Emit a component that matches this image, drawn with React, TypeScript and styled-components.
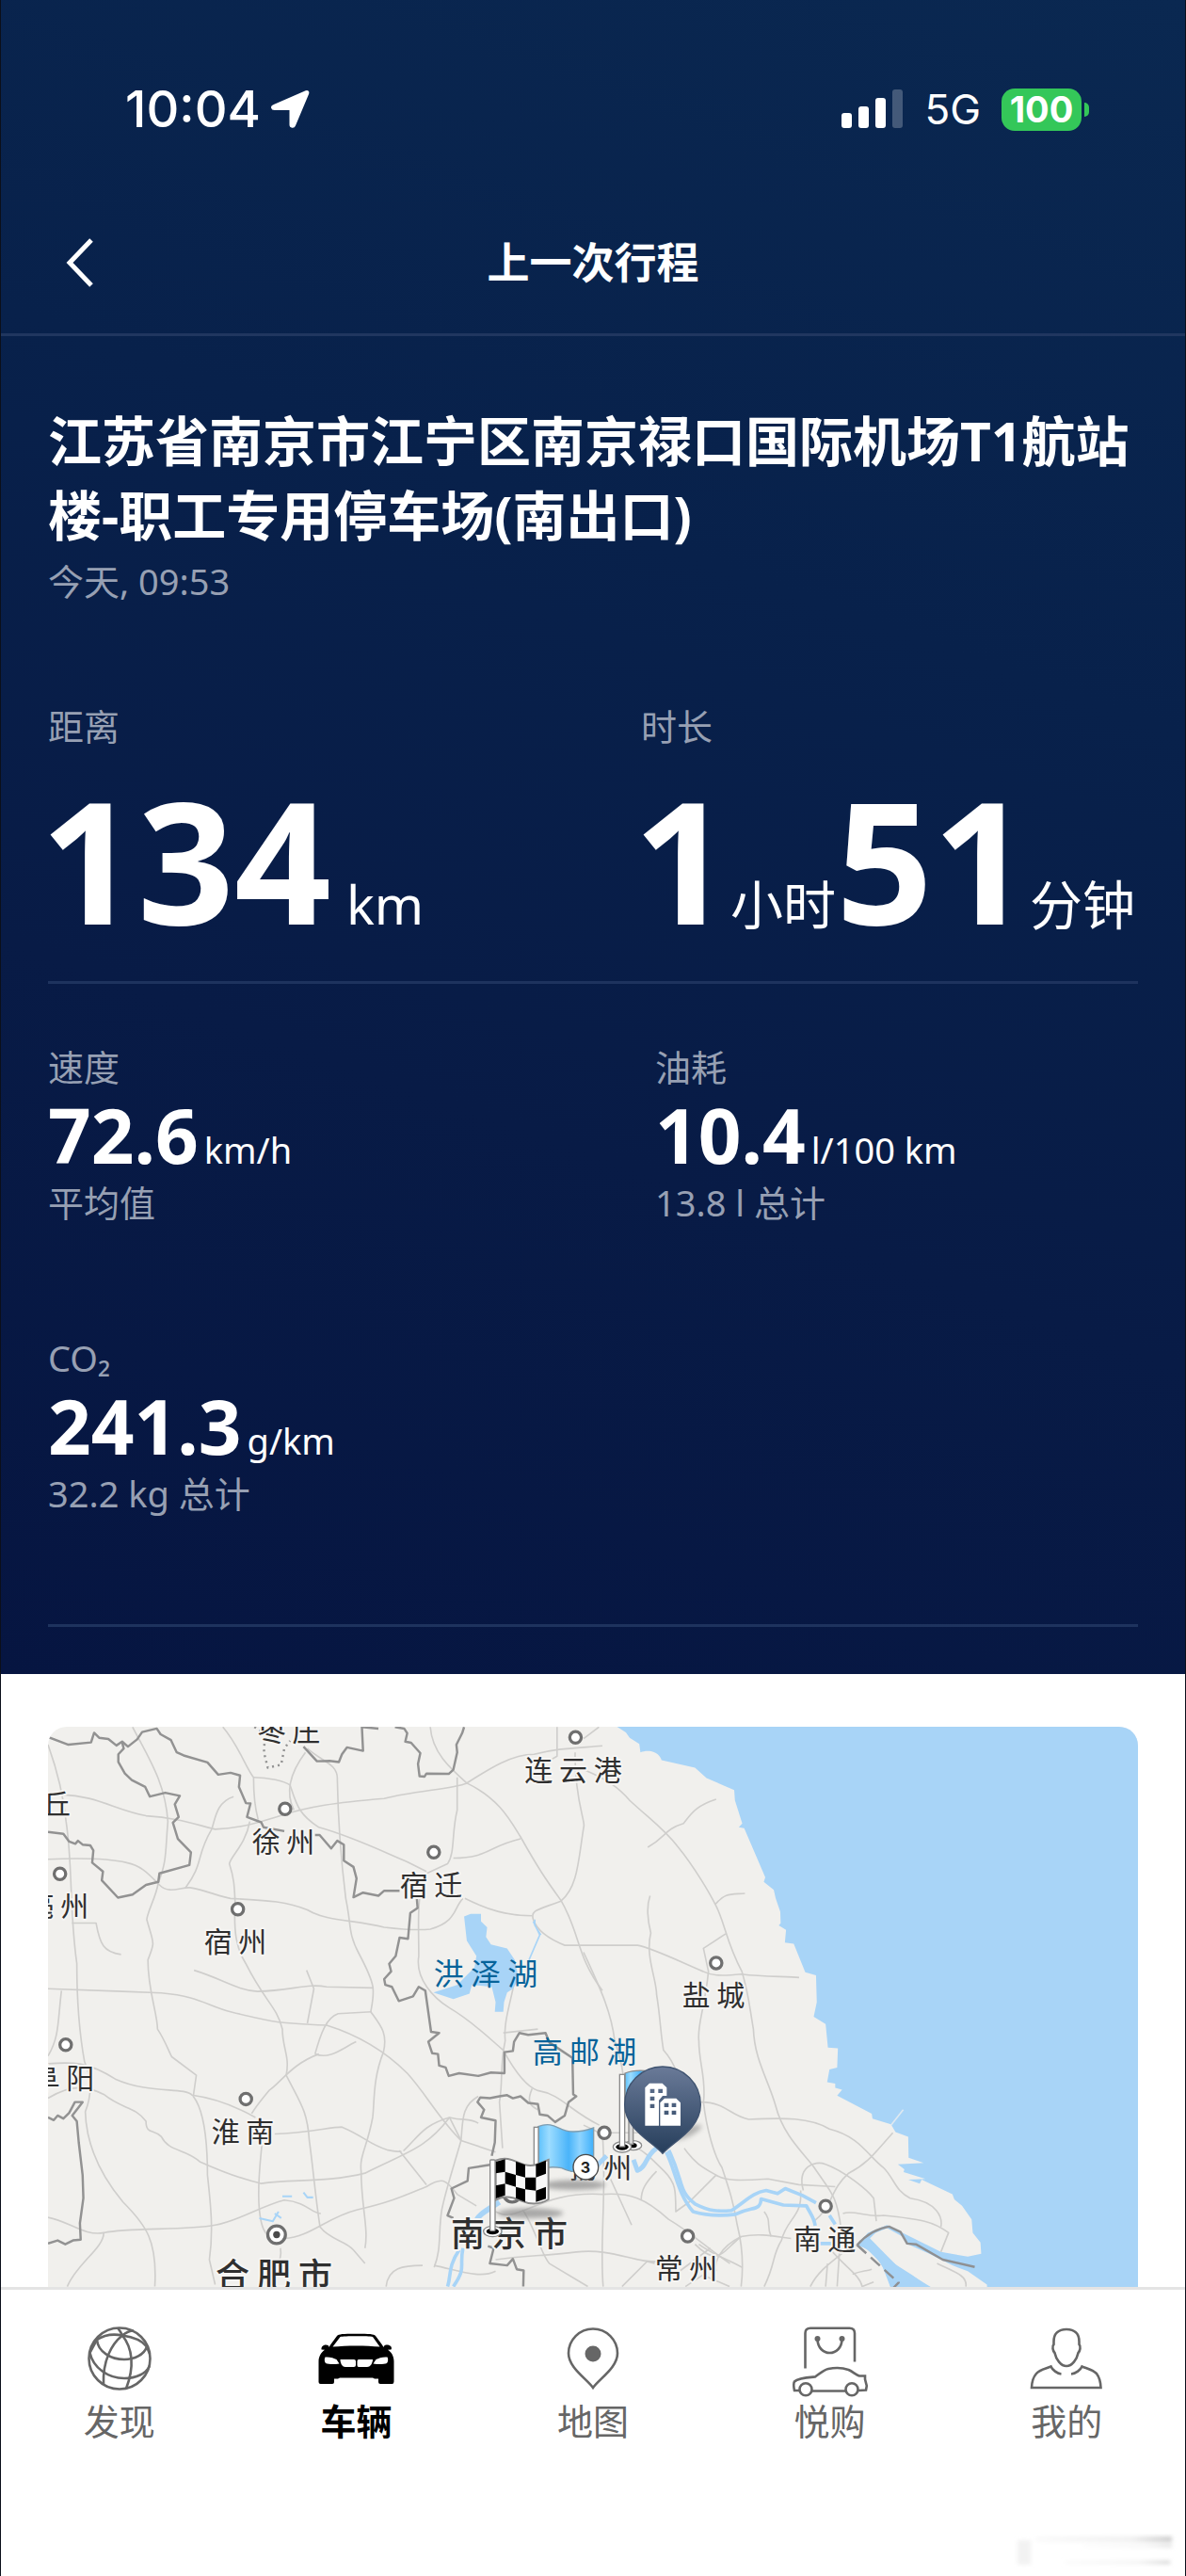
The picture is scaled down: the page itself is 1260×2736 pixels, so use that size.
import React from "react";
import styled, { createGlobalStyle } from "styled-components";

const GlobalStyle = createGlobalStyle`
  *, *::before, *::after { box-sizing: border-box; }
  body {
    margin: 0;
    background: #ffffff;
    font-family: "Noto Sans", "Noto Sans CJK SC", sans-serif;
  }
  h1, h2, p { margin: 0; }
`;

const cjk = `"Noto Sans", "Noto Sans CJK SC", sans-serif`;
const system = `Inter, "Noto Sans CJK SC", sans-serif`;

const Page = styled.div`
  display: flex;
  flex-direction: column;
  min-height: 100vh;
  border: solid #0b0f1a;
  border-width: 0 1px;
  background: #ffffff;
`;

const Panel = styled.section`
  background: linear-gradient(200deg, #0a2851 0%, #08214b 35%, #081b46 65%, #061541 100%);
  color: #ffffff;
`;

const StatusBar = styled.div`
  display: flex;
  align-items: center;
  justify-content: space-between;
  height: 204px;
  padding: 86px 102px 58px 132px;
  font-family: ${system};
`;

const StatusGroup = styled.div<{ $gap: number }>`
  display: flex;
  align-items: center;
  gap: ${(p) => p.$gap}px;
`;

const Clock = styled.span`
  font-size: 54px;
  font-weight: 500;
  line-height: 60px;
`;

const Network = styled.span`
  font-size: 44px;
  line-height: 60px;
`;

const Battery = styled.span`
  display: flex;
  align-items: center;
  gap: 3px;

  &::after {
    content: "";
    width: 5px;
    height: 15px;
    border-radius: 0 5px 5px 0;
    background: #34c759;
  }
`;

const BatteryLevel = styled.span`
  width: 85px;
  height: 45px;
  border-radius: 14px;
  background: #34c759;
  font-size: 38px;
  font-weight: 700;
  line-height: 45px;
  text-align: center;
`;

const NavBar = styled.header`
  display: grid;
  grid-template-columns: 1fr auto 1fr;
  align-items: center;
  height: 153px;
  padding: 0 50px;
  border-bottom: 3px solid #20365f;
`;

const BackButton = styled.button`
  display: flex;
  align-items: center;
  justify-content: center;
  justify-self: start;
  width: 68px;
  height: 80px;
  padding: 0;
  border: 0;
  background: none;
  color: inherit;
`;

const NavTitle = styled.h1`
  font-size: 45px;
  font-weight: 700;
  line-height: 60px;
`;

const Body = styled.div`
  padding: 72px 50px 50px;
`;

const Address = styled.h2`
  font-size: 57px;
  font-weight: 700;
  line-height: 79px;
`;

const Muted = styled.p`
  color: #97a0b3;
  font-size: 38px;
  line-height: 52px;
`;

const When = styled(Muted)`
  margin-top: 4px;
`;

const Summary = styled.div`
  display: grid;
  grid-template-columns: 1fr 1fr;
  column-gap: 102px;
  margin-top: 102px;
  padding-bottom: 39px;
  border-bottom: 3px solid #1e335e;
`;

const Details = styled.div`
  display: grid;
  grid-template-columns: 1fr 1fr;
  gap: 113px 132px;
  padding: 62px 0 113px;
  border-bottom: 3px solid #1e335e;
`;

const Metric = styled.div<{ $gap: number }>`
  display: flex;
  flex-direction: column;
  gap: ${(p) => p.$gap}px;
  white-space: nowrap;
`;

const Value = styled.p<{ $size: number }>`
  display: flex;
  align-items: baseline;
  height: ${(p) => p.$size}px;
  font-size: ${(p) => p.$size}px;
  font-weight: 700;
  line-height: ${(p) => p.$size}px;
`;

const Headline = styled(Value)`
  margin-left: -8px;
`;

const Unit = styled.span<{ $size: number; $before?: number }>`
  margin-left: ${(p) => p.$before ?? 0}px;
  font-size: ${(p) => p.$size}px;
  font-weight: 400;
  line-height: 1;
`;

const MapSection = styled.section`
  display: flex;
  flex: 1;
  min-height: 400px;
  padding: 56px 50px 0;
`;

const MapFrame = styled.div`
  position: relative;
  flex: 1;
  overflow: hidden;
  border-radius: 20px 20px 0 0;
  background: #f1f0ed;
`;

const MapCanvas = styled.svg`
  position: absolute;
  inset: 0;
  display: block;
  width: 100%;
  height: 100%;
`;

const TabBar = styled.nav`
  position: relative;
  display: grid;
  grid-template-columns: repeat(5, 1fr);
  height: 307px;
  padding-top: 38px;
  border-top: 3px solid #e4e4e4;
  background: #ffffff;
`;

const Tab = styled.button<{ $active?: boolean }>`
  display: flex;
  flex-direction: column;
  align-items: center;
  height: 132px;
  padding: 0;
  border: 0;
  background: none;
  color: ${(p) => (p.$active ? "#000000" : "#666666")};
  font-family: ${cjk};
  font-size: 38px;
  font-weight: ${(p) => (p.$active ? 700 : 400)};
  line-height: 50px;
`;

const Smudge = styled.svg`
  position: absolute;
  right: 8px;
  bottom: 6px;
`;

const Icon = ({ children }: { children: React.ReactNode }) => (
  <svg width="84" height="76" viewBox="0 0 84 76" fill="none" stroke="currentColor" strokeWidth="2.6" aria-hidden="true">
    {children}
  </svg>
);

const GlobeIcon = () => (
  <Icon>
    <circle cx="42" cy="35" r="32.5" />
    <path d="M40 2.5C42 5 44 8 45 10.500C48 8 52 5.500 57 5.500" />
    <path d="M18 15C27 9 37 9 45 10.500C56 12 66 16 71 22.500" />
    <path d="M18 15C19 28 33 36 47 36C58 36 68 31 71 22.500L74 30" />
    <path d="M18 15L10.500 29C14 45 30 56 47 56C60 56 70 51 74 43" />
    <path d="M45 10.500C33 20 24 38 25 62.500" />
    <path d="M45 10.500C56 24 58 44 49 67" />
  </Icon>
);

const CarIcon = () => (
  <Icon>
    <path
      fill="currentColor"
      stroke="none"
      fillRule="evenodd"
      d="M22 11C24 9 28 8.800 42 8.800C57 8.800 61 9 63 11L70 20.500L71.500 23C72 20.500 75 20.300 77 20.800C80 21.600 80.500 24.500 79.500 25.500L76 25.800C80 28 82.500 33 82.500 38V59.500Q82.500 62 80.500 62H68Q66 62 66 60V56.500L62 56.500L60 55.500H25L23 56.500H19V60Q19 62 17 62H4.500Q2.500 62 2.500 60V38C2.500 33 5.500 28 9 25.800L5.500 25.500C5 23.500 6.500 21.500 8.500 20.800C11 20.300 13.500 20.800 13.500 23L15 20.500ZM25.500 12L17.500 22.500C32 21 53 21 67.500 22.500L60 12C56 11 29 11 25.500 12ZM9.500 33.500C14 33 19 34.500 21.500 36L24.500 40.500C18 41.500 13 41 10 40C8.500 38 8.500 35.500 9.500 33.500ZM75.500 33.500C71 33 66 34.500 63.500 36L60.500 40.500C67 41.500 72 41 75 40C76.500 38 76.500 35.500 75.500 33.500ZM25.500 36H40Q42 36 42 38V42Q42 44 40 44H31C27 44 25.500 39 25.500 36ZM45 36H60C60 39 58 44 54 44H45Q43.500 44 43.500 42V38Q43.500 36 45 36Z"
    />
  </Icon>
);

const PinIcon = () => (
  <Icon>
    <path d="M42 66C36 57 16 45 16 29.500A26 26 0 0 1 68 29.500C68 45 48 57 42 66Z" />
    <circle cx="42" cy="30" r="8.500" fill="currentColor" stroke="none" />
  </Icon>
);

const ShopIcon = () => (
  <Icon>
    <path d="M15.500 45.500V8Q15.500 2.700 21 2.700H62.500Q68 2.700 68 8V38.500" />
    <path d="M28.500 14C28.500 34 54.500 34 54.500 14" />
    <circle cx="28.500" cy="14" r="3" fill="currentColor" stroke="none" />
    <circle cx="54.500" cy="14" r="3" fill="currentColor" stroke="none" />
    <path d="M9 69H4Q2.500 62 4 59.500C8 55.500 20 55 26 54.500C31 51 35 47 40 46C47 44.500 56 45 61.500 47C66 49 69 52 73 53.500H79V57L80.800 64L80 68.500L72 69" />
    <path d="M23 69.500H58" />
    <circle cx="16" cy="67.800" r="6.500" />
    <circle cx="65" cy="67.800" r="6.500" />
  </Icon>
);

const PersonIcon = () => (
  <Icon>
    <path d="M42 4C33 4 28.500 9 28.500 17V20C26.500 22 27.500 27 29.500 29C31 36 36 43 42 43C48 43 53 36 54.500 29C56.500 27 57.500 22 55.500 20V17C55.500 9 51 4 42 4Z" />
    <path d="M36.500 51.500C32 51 27 47 25.500 43.500C19 46 13 47 10 51C6.500 55 5.200 60 5 66H78.500C78.300 60 77 55 74 51C70 47 65 46 58.500 43.500C57 47 52 51 47 51.500" />
  </Icon>
);

const roads = [
  "M125 765L320 772L420 776C520 785 540 810 600 825C700 850 720 855 850 860C930 885 1000 925 1060 985C1110 1040 1140 1100 1200 1160L1290 1190",
  "M505 717C580 740 620 770 670 772C760 770 800 750 850 760L972 763",
  "M798 717L817 765L800 855",
  "M820 935C835 880 850 840 880 830L967 825M820 935C860 950 890 920 927 903",
  "M125 130C150 200 165 260 172 330C190 450 180 560 200 700C200 830 210 900 220 955C240 1000 240 1040 222 1085C225 1180 270 1260 320 1320C380 1380 410 1420 403 1540",
  "M345 84C390 170 430 230 437 330C430 410 435 430 412 490C405 530 385 560 382 585C400 650 405 640 385 690C385 770 410 830 410 870C430 900 440 930 447 942L511 990L503 1045C530 1080 540 1160 540 1250C550 1340 555 1400 545 1470L560 1535",
  "M160 260C250 262 300 300 380 315C460 320 500 335 560 350C640 345 680 330 720 318C800 290 880 280 1000 270C1080 250 1180 245 1215 230C1270 195 1330 155 1390 155C1450 140 1480 140 1568 133",
  "M125 428C200 425 280 425 330 437C370 445 390 470 415 495C440 520 470 500 495 502C540 510 570 525 600 530C680 535 740 535 800 560C850 590 920 585 1000 605C1060 612 1100 612 1120 610C1190 590 1180 555 1205 530",
  "M608 265C560 280 560 330 550 352C510 420 530 440 483 502",
  "M580 84C620 130 640 190 660 215C660 260 665 300 672 325",
  "M650 330C640 390 600 420 597 440C610 480 610 500 612 540C608 620 615 660 640 700C690 800 720 810 735 870C735 920 755 940 745 990C780 1060 800 1080 805 1160C815 1230 820 1300 833 1385C860 1420 900 1420 920 1445L950 1480",
  "M660 215C700 215 740 225 755 235C770 280 775 310 830 345C920 370 1000 410 1060 435L1110 460",
  "M795 150C750 210 745 260 765 300",
  "M800 140C840 175 880 180 878 220C880 330 885 410 900 530C915 600 905 620 935 675C980 760 975 770 965 825C990 860 1010 880 998 930C970 1000 975 1060 970 1100C955 1180 935 1200 940 1240C940 1330 960 1390 950 1440",
  "M125 960C190 955 230 955 300 1000C390 1040 480 1020 500 1042C560 1050 620 1075 665 1100",
  "M830 935C760 960 730 1010 700 1030C680 1055 670 1065 655 1090",
  "M125 1050C190 1010 230 1020 270 1040C320 1080 350 1070 380 1110C380 1145 400 1130 420 1150C440 1190 480 1180 520 1215C620 1260 640 1260 680 1272C760 1260 850 1270 950 1245C1060 1190 1110 1180 1170 1100C1210 1110 1220 1100 1245 1115",
  "M715 1143C800 1140 860 1125 890 1125C950 1150 960 1170 1010 1185C1040 1190 1050 1190 1040 1187L1110 1275",
  "M683 1160C675 1230 670 1290 675 1340C680 1390 690 1400 700 1410",
  "M125 1360C180 1370 220 1410 270 1400C270 1440 200 1480 175 1540",
  "M270 1400C340 1385 480 1395 560 1380C620 1370 680 1330 740 1315C800 1320 810 1350 835 1350",
  "M740 1415C810 1410 850 1360 930 1340C1020 1320 1060 1300 1110 1280C1150 1255 1160 1260 1190 1300L1240 1330",
  "M730 1440C735 1470 720 1480 712 1510",
  "M187 594H250C260 650 270 670 315 676",
  "M160 770C150 850 155 890 125 940",
  "M1120 84C1125 150 1170 190 1215 230C1300 270 1330 330 1355 370C1400 450 1420 480 1460 535C1510 620 1500 680 1568 770",
  "M1190 215L1190 300C1175 360 1185 410 1165 440L1100 470C1085 560 1090 600 1090 680C1080 740 1130 790 1170 815C1230 850 1280 900 1310 925C1340 980 1370 1020 1400 1030C1460 1040 1480 1080 1560 1120",
  "M1180 425C1270 425 1270 395 1355 375",
  "M1497 150C1495 260 1520 320 1520 340C1505 430 1505 500 1460 537C1400 560 1380 560 1388 585C1400 620 1440 640 1470 652H1660C1700 660 1760 690 1830 720C1850 730 1870 733 1930 727C1990 735 2050 732 2080 736",
  "M1450 84L1450 160L1380 200",
  "M1210 530C1270 560 1320 575 1385 575",
  "M1340 740C1330 800 1310 850 1315 900C1300 970 1310 1000 1300 1060L1308 1180",
  "M1310 880L1400 870M1385 1025C1370 1060 1380 1070 1400 1080",
  "M1245 1045C1200 1070 1205 1110 1200 1160C1180 1230 1160 1290 1150 1340C1140 1400 1150 1440 1130 1490",
  "M1200 1160L1170 1100M1050 1187C1090 1150 1100 1120 1170 1100",
  "M1130 1485C1200 1500 1250 1520 1290 1500M1005 1540C1010 1490 1050 1485 1100 1485",
  "M1290 1345C1350 1380 1400 1290 1568 1300C1640 1295 1680 1310 1740 1365C1800 1400 1840 1440 1900 1480",
  "M1360 1340C1390 1380 1410 1460 1430 1480L1530 1540M1290 1470C1360 1460 1420 1460 1500 1450C1600 1440 1650 1480 1720 1475",
  "M1519 670C1560 760 1590 820 1600 900C1620 960 1630 1000 1625 1130",
  "M1568 1140C1580 1300 1560 1420 1570 1540",
  "M1519 1120L1560 1140L1680 1140",
];

const roadsEast = [
  "M0 114L40 84M0 195C60 220 90 240 120 275C180 330 210 350 245 395C290 450 330 520 345 550C370 600 370 640 412 720C430 780 430 800 442 870C445 950 480 1000 500 1070C520 1150 580 1200 600 1230C640 1290 660 1300 670 1390L660 1540",
  "M345 272C290 290 280 310 260 335C210 350 215 370 167 397",
  "M343 545C370 515 380 520 420 517",
  "M173 523C160 560 170 600 175 620C160 680 190 740 190 780C200 840 200 880 208 925C240 960 250 1000 262 1060",
  "M370 622L312 660L325 720C315 820 295 860 300 900C300 960 320 1000 312 1060C320 1130 340 1200 360 1230C380 1290 390 1320 400 1380C415 1440 415 1500 410 1540",
  "M305 1060C370 1060 380 1095 430 1105C520 1100 590 1100 640 1130C720 1150 740 1200 780 1230C810 1260 810 1290 850 1310C920 1320 935 1360 930 1385",
  "M805 1140C760 1190 740 1220 690 1245C640 1290 650 1330 600 1370",
  "M262 1180C290 1220 310 1230 345 1250C370 1265 400 1265 480 1260L560 1275L655 1280",
  "M345 1250L275 1320L240 1345C240 1290 240 1270 210 1240C180 1210 160 1190 140 1180",
  "M190 1240C160 1270 150 1290 150 1315",
  "M572 1290C555 1230 600 1210 630 1222C680 1240 740 1290 755 1310L762 1370",
  "M565 1290C570 1360 530 1360 515 1420C490 1460 500 1480 470 1540",
  "M675 1350C700 1340 740 1360 780 1355C880 1365 910 1370 950 1400L930 1450",
  "M290 1430C350 1490 360 1450 410 1410C460 1400 500 1410 540 1415",
  "M300 1430C340 1460 380 1470 412 1490M410 1410C350 1440 340 1480 345 1500",
  "M470 1345C490 1370 475 1380 488 1410",
  "M590 1540C610 1500 640 1480 690 1440C700 1430 710 1435 720 1430M635 1480L630 1540",
  "M640 1440C680 1490 720 1510 725 1540L755 1528M700 1508C720 1500 735 1500 750 1495",
  "M250 1500L330 1440M265 1540L310 1510L380 1540",
  "M100 1540L165 1475L185 1480M125 1380L70 1260",
  "M920 1480C960 1500 1000 1510 995 1540",
];

const borders = [
  "M125 110L178 130L237 124L245 99L258 112L282 115L303 132L318 122L333 135L357 116L370 97L408 88L418 103L445 118L460 150L478 158L540 176L568 208L600 203L625 210L622 240L640 282L652 283L643 318L680 332L686 345L740 355",
  "M318 124L322 140L308 155L308 175L325 205L343 222L378 240L390 265L430 255L468 263L455 285L465 318L450 333L463 375L497 410L493 443L415 465L412 487L380 495L345 520L307 528L265 483L268 460L240 437L243 405L235 392L215 390L203 380L196 388L180 382L165 362L125 357",
  "M790 135L825 173L858 172L882 175L890 155L903 137L945 146L942 84L985 88",
  "M1028 84L1052 88L1060 100L1055 122L1070 125L1094 152L1088 180L1092 212L1105 213L1110 205L1168 206L1180 195L1190 150L1188 130L1203 100L1208 84",
  "M820 365L832 365L862 400L878 380L895 390L895 432L920 448L928 478L920 527L945 515L985 523L1000 510L1040 510",
  "M1085 530L1087 555L1068 568L1062 635L1040 632L1030 680L1013 700L1018 720L1000 740L1003 755L1020 760L1038 797L1075 785L1090 760L1107 770L1122 877L1143 880L1115 903L1125 933L1140 935L1143 965L1160 970L1168 992L1195 985L1245 992L1278 983L1313 985V930L1335 927L1338 903L1352 880L1375 885L1420 880L1430 905L1490 945L1492 1040L1500 1045L1480 1060L1470 1095L1445 1112L1425 1095L1405 1092L1400 1065L1375 1062L1355 1045L1335 1050L1320 1042L1300 1045L1275 1050L1250 1048L1243 1060L1260 1080L1252 1100L1290 1108L1288 1165L1280 1200",
  "M1283 1222L1220 1232L1217 1265L1175 1285L1182 1310L1165 1355L1180 1362",
  "M1270 1435L1285 1440L1275 1480L1320 1485L1335 1468L1345 1495L1363 1498L1362 1540",
  "M125 1100L140 1107L150 1095L165 1103L180 1088L195 1060L215 1060L188 1095L200 1110L205 1165L215 1250L217 1310L208 1375L210 1418L190 1420L170 1430L150 1420L125 1428",
];

const cities: [number, number][] = [
  [742, 297], [1498, 111], [1129, 410], [156, 466], [619, 558], [171, 911],
  [640, 1052], [1573, 1140], [1864, 698], [2149, 1331], [1790, 1409],
];

/* Label anchors share the route layer's units; they are converted to frame pixels when drawn. */
type Place = { name: string; x: number; y: number; kind?: "lake" | "capital" };
const places: Place[] = [
  { name: "枣 庄", x: 752, y: 92 },
  { name: "连 云 港", x: 1493, y: 197 },
  { name: "丘", x: 146, y: 285 },
  { name: "徐 州", x: 737, y: 382 },
  { name: "宿 迁", x: 1123, y: 495 },
  { name: "亳 州", x: 149, y: 550 },
  { name: "宿 州", x: 612, y: 643 },
  { name: "洪 泽 湖", x: 1264, y: 728, kind: "lake" },
  { name: "高 邮 湖", x: 1522, y: 930, kind: "lake" },
  { name: "阜 阳", x: 163, y: 997 },
  { name: "淮 南", x: 633, y: 1138 },
  { name: "盐 城", x: 1858, y: 782 },
  { name: "扬 州", x: 1564, y: 1230 },
  { name: "南 京 市", x: 1326, y: 1404, kind: "capital" },
  { name: "合 肥 市", x: 714, y: 1512, kind: "capital" },
  { name: "常 州", x: 1786, y: 1492 },
  { name: "南 通", x: 2145, y: 1415 },
];

const MapLabel = styled.text<{ $kind?: string }>`
  font-family: "Noto Sans CJK SC", sans-serif;
  font-size: ${(p) => (p.$kind === "capital" ? 36 : p.$kind === "lake" ? 32 : 30)}px;
  font-weight: ${(p) => (p.$kind === "capital" ? 500 : 400)};
  fill: ${(p) => (p.$kind === "lake" ? "#06639a" : "#2f2f2f")};
  stroke: ${(p) => (p.$kind === "lake" ? "none" : "#f6f5f3")};
  stroke-width: 4px;
  stroke-linejoin: round;
  paint-order: stroke;
  text-anchor: middle;
`;

const BadgeText = styled.text`
  font-family: ${system};
  font-size: 16px;
  font-weight: 700;
  fill: #222222;
  text-anchor: middle;
`;

const toX = (v: number) => Math.round(v / 2.45 - 51);
const toY = (v: number) => Math.round(v / 2.45 - 34);

const TripMap = () => (
  <MapCanvas viewBox="0 0 1158 595" preserveAspectRatio="xMinYMin slice" role="img" aria-label="行程地图">
    <defs>
      <linearGradient id="pin" x1="0" y1="0" x2="0" y2="1">
        <stop offset="0" stopColor="#6a7a98" />
        <stop offset="1" stopColor="#263e5b" />
      </linearGradient>
      <linearGradient id="flag" x1="0" y1="0" x2="1" y2="0">
        <stop offset="0" stopColor="#5cc0fb" />
        <stop offset="0.200" stopColor="#9cdcff" />
        <stop offset="0.550" stopColor="#4ab4f9" />
        <stop offset="0.750" stopColor="#8ed4ff" />
        <stop offset="1" stopColor="#3fb0fb" />
      </linearGradient>
      <filter id="soft" x="-30%" y="-60%" width="160%" height="220%">
        <feGaussianBlur stdDeviation="8" />
      </filter>
    </defs>

    <g transform="translate(-51 -34) scale(0.40816)" fill="none" strokeLinejoin="round">
      <g stroke="#cfcecc" strokeWidth="4">
        {roads.map((d) => <path key={d} d={d} />)}
      </g>
      <g transform="translate(1519 0)" stroke="#cfcecc" strokeWidth="4">
        {roadsEast.map((d) => <path key={d} d={d} />)}
      </g>
      <g transform="translate(1519 0)">
        <path
          fill="#a8d4f7"
          d="M82 80L110 98L120 112L145 128L148 150C165 143 195 145 203 170L290 190L320 217L392 248L394 275L413 335L404 345L418 347L473 475L469 487L495 508L500 530L512 565L513 595L508 600L527 612L524 645L547 648L577 722L605 730L607 800L599 838L630 857L636 918L662 920L660 970L640 975L634 1008L655 1012L655 1023L673 1028L660 1043L750 1090L752 1103L800 1118L812 1138L845 1150L846 1205L885 1218L818 1222L835 1235L833 1242L890 1260L845 1262L875 1272L880 1262L960 1300L965 1313L985 1330L1010 1365L1013 1400L1033 1425L1035 1455L1000 1462L930 1450L850 1410L790 1380L740 1400L712 1432L735 1440L775 1480L800 1545H905L855 1510L800 1475L760 1430L745 1415L760 1400L790 1388L830 1410L845 1430L900 1455L960 1485L1000 1500L1050 1535L1052 1600H1500V80Z"
        />
        <path fill="#a8d4f7" d="M712 1432C760 1445 790 1500 800 1545H910L820 1490L745 1415Z" />
        <path stroke="#dfe9f1" strokeWidth="4" d="M800 1120L832 1080" />
        <path stroke="#8f9092" strokeWidth="6" d="M712 1432C740 1400 770 1388 795 1384L825 1398L842 1428L865 1430L935 1470L1018 1489" />
        <path stroke="#8f9092" strokeWidth="6" strokeDasharray="32 16" d="M712 1432L765 1480L820 1530L805 1545" />
      </g>
      <g stroke="#a8d4f7" strokeWidth="9">
        <path transform="translate(1519 0)" d="M222 1185C262 1270 245 1290 290 1325C330 1345 350 1345 385 1342C420 1320 440 1295 475 1290L505 1298L525 1285L570 1303L605 1322M640 1355L655 1378" />
        <path transform="translate(1519 0)" d="M215 1190C240 1240 245 1300 285 1345C320 1355 350 1358 395 1352C440 1330 460 1345 462 1312L520 1328L580 1330C590 1350 600 1360 603 1382M615 1428H645" />
        <path transform="translate(1519 0)" strokeWidth="12" d="M190 1180C160 1200 165 1230 140 1238L130 1210M60 1200L35 1225" />
        <path d="M1300 1320C1270 1340 1240 1355 1238 1375" strokeWidth="14" />
        <path d="M1195 1445C1165 1490 1175 1510 1165 1540M1205 1440C1195 1490 1215 1490 1180 1540" />
        <path d="M1388 590L1405 625L1377 690M1392 585V600L1408 625" strokeWidth="4" />
        <path d="M675 1362L710 1370L725 1345M715 1350L732 1362M790 1295L800 1308L815 1308M735 1305H760" strokeWidth="5" />
      </g>
      <path
        fill="#a8d4f7"
        d="M1208 577L1225 570L1252 570V590L1268 605L1265 630L1278 650L1320 660L1340 690L1350 740L1335 765L1320 775L1312 800L1310 825L1288 825L1290 800L1280 760L1228 755L1222 778L1180 792L1128 775L1190 755L1235 710L1240 680L1215 640Z"
      />
      <g stroke="#929292" strokeWidth="6">
        {borders.map((d) => <path key={d} d={d} />)}
        <path strokeDasharray="5 10" d="M662 84L690 100L687 150L697 190L732 182L740 140L755 120" />
      </g>
      <g fill="#ffffff" stroke="#6f6f6f" strokeWidth="8">
        {cities.map(([x, y]) => <circle key={x} cx={x} cy={y} r="15" />)}
        <circle cx="720" cy="1405" r="23" />
        <circle cx="720" cy="1405" r="9" fill="#4a4a4a" stroke="none" />
        <circle cx="1333" cy="1297" r="23" />
      </g>
    </g>

    {places.map((p) => (
      <MapLabel key={p.name} $kind={p.kind} x={toX(p.x)} y={toY(p.y) + (p.kind === "capital" ? 13 : 11)}>
        {p.name}
      </MapLabel>
    ))}

    <g transform="translate(409 316) scale(0.33333)">
      <ellipse cx="450" cy="512" rx="100" ry="16" fill="#8a8a8a" opacity="0.700" filter="url(#soft)" />
      <ellipse cx="310" cy="602" rx="105" ry="16" fill="#8a8a8a" opacity="0.700" filter="url(#soft)" />
      <ellipse cx="810" cy="345" rx="50" ry="14" fill="#8a8a8a" opacity="0.600" filter="url(#soft)" transform="rotate(-25 810 345)" />

      <g stroke="#8b8b8b" strokeWidth="4" fill="#ffffff">
        <ellipse cx="638" cy="386" rx="27" ry="15" />
        <ellipse cx="636" cy="386" rx="14" ry="8" fill="#000000" stroke="none" />
        <rect x="624" y="170" width="14" height="212" fill="#d8d8d8" />
        <ellipse cx="603" cy="391" rx="29" ry="17" />
        <ellipse cx="603" cy="391" rx="20" ry="10" fill="#000000" stroke="none" />
        <path d="M612 156C650 140 690 150 700 150V270H612Z" fill="url(#flag)" />
        <rect x="595" y="160" width="16" height="230" />
        <path d="M335 326C390 305 400 345 450 342C470 342 490 338 512 330V455C480 470 450 478 410 458C380 452 360 455 335 462Z" fill="url(#flag)" stroke="#7f9db0" />
        <rect x="322" y="328" width="14" height="130" />
      </g>

      <g>
        <path d="M200 434C250 415 270 450 310 450C335 450 350 438 368 432V558C340 575 310 575 280 562C250 548 225 545 200 560Z" fill="#f8f8f8" stroke="#8a8a8a" strokeWidth="6" />
        <path
          fill="#000000"
          d="M200 438L230 430V470L200 475ZM264 437L294 448V488L264 480ZM328 446L360 434V476L328 488ZM230 470L264 480V518L230 508ZM294 488L328 488V530L294 526ZM200 514L230 508V545L200 555ZM264 518L294 526V566L264 554ZM328 530L360 518V556L328 566Z"
        />
        <ellipse cx="190" cy="660" rx="29" ry="17" fill="#ffffff" stroke="#8a8a8a" strokeWidth="4" />
        <ellipse cx="190" cy="660" rx="20" ry="10" fill="#000000" />
        <rect x="182" y="432" width="16" height="226" rx="3" fill="#ffffff" stroke="#8b8b8b" strokeWidth="4" />
      </g>

      <path d="M732 412C700 375 611 335 611 256A121 121 0 0 1 853 256C853 335 764 375 732 412Z" fill="url(#pin)" stroke="#3f5370" strokeWidth="4" />
      <path
        fill="#ffffff"
        fillRule="evenodd"
        d="M676 323V202L690 188H731L745 202V228H732L720 242V323ZM692 206V219H706V206ZM718 206V219H732V206ZM692 230V243H706V230ZM692 254V267H706V254ZM724 323V250L738 236H775L789 250V323ZM737 251V264H751V251ZM761 251V264H775V251ZM737 275V288H751V275ZM761 275V288H775V275Z"
      />
      <circle cx="487" cy="455" r="40" fill="#ffffff" stroke="#4a4a4a" strokeWidth="4" />
    </g>
    <BadgeText x="571" y="474">3</BadgeText>
  </MapCanvas>
);

const tabs = [
  { label: "发现", icon: <GlobeIcon /> },
  { label: "车辆", icon: <CarIcon />, active: true },
  { label: "地图", icon: <PinIcon /> },
  { label: "悦购", icon: <ShopIcon /> },
  { label: "我的", icon: <PersonIcon /> },
];

const details = [
  { label: "速度", value: "72.6", unit: "km/h", note: "平均值" },
  { label: "油耗", value: "10.4", unit: "l/100 km", note: "13.8 l 总计" },
  { label: "CO₂", value: "241.3", unit: "g/km", note: "32.2 kg 总计" },
];

export default function App() {
  return (
    <Page>
      <GlobalStyle />
      <Panel>
        <StatusBar>
          <StatusGroup $gap={10}>
            <Clock>10:04</Clock>
            <svg width="42" height="42" viewBox="0 0 42 42" aria-hidden="true">
              <path
                fill="#ffffff"
                stroke="#ffffff"
                strokeWidth="4"
                strokeLinejoin="round"
                d="M38.500 3.200C39.300 2.900 39.600 3.300 39.300 4L25 38C24.500 39.200 22.500 39 22.500 37.500V21Q22.500 20 21.500 20H4.500C2.800 20 2.500 18.600 4 18Z"
              />
            </svg>
          </StatusGroup>
          <StatusGroup $gap={22}>
            <svg width="66" height="42" viewBox="0 0 66 42" fill="#ffffff" aria-hidden="true">
              <rect x="0" y="25" width="11" height="16" rx="3" />
              <rect x="18" y="18" width="11" height="23" rx="3" />
              <rect x="36" y="9" width="11" height="32" rx="3" />
              <rect x="54" y="0" width="11" height="41" rx="3" opacity="0.240" />
            </svg>
            <Network>5G</Network>
            <Battery>
              <BatteryLevel>100</BatteryLevel>
            </Battery>
          </StatusGroup>
        </StatusBar>

        <NavBar>
          <BackButton aria-label="返回">
            <svg width="30" height="52" viewBox="0 0 30 52" fill="none" stroke="currentColor" strokeWidth="5" aria-hidden="true">
              <path d="M27 2L4 26L27 50" />
            </svg>
          </BackButton>
          <NavTitle>上一次行程</NavTitle>
        </NavBar>

        <Body>
          <Address>江苏省南京市江宁区南京禄口国际机场T1航站楼-职工专用停车场(南出口)</Address>
          <When>今天, 09:53</When>

          <Summary>
            <Metric $gap={26}>
              <Muted>距离</Muted>
              <Headline $size={180}>
                134<Unit $size={56} $before={16}>km</Unit>
              </Headline>
            </Metric>
            <Metric $gap={26}>
              <Muted>时长</Muted>
              <Headline $size={180}>
                1<Unit $size={56}>小时</Unit>
                <span>51</span>
                <Unit $size={56}>分钟</Unit>
              </Headline>
            </Metric>
          </Summary>

          <Details>
            {details.map((d) => (
              <Metric key={d.label} $gap={6}>
                <Muted>{d.label}</Muted>
                <Value $size={80}>
                  {d.value}
                  <Unit $size={38} $before={6}>{d.unit}</Unit>
                </Value>
                <Muted>{d.note}</Muted>
              </Metric>
            ))}
          </Details>
        </Body>
      </Panel>

      <MapSection>
        <MapFrame>
          <TripMap />
        </MapFrame>
      </MapSection>

      <TabBar>
        {tabs.map((t) => (
          <Tab key={t.label} $active={t.active} aria-current={t.active ? "page" : undefined}>
            {t.icon}
            {t.label}
          </Tab>
        ))}
        <Smudge width="180" height="44" viewBox="0 0 180 44" aria-hidden="true">
          <defs>
            <linearGradient id="streak" x1="0" y1="0" x2="1" y2="0">
              <stop offset="0" stopColor="#fafafa" />
              <stop offset="0.700" stopColor="#f0f0f0" />
              <stop offset="1" stopColor="#cccccc" />
            </linearGradient>
            <filter id="haze">
              <feGaussianBlur stdDeviation="2" />
            </filter>
          </defs>
          <g filter="url(#haze)">
            <rect x="10" y="12" width="14" height="26" fill="#f2f2f2" />
            <rect x="30" y="8" width="144" height="6" fill="url(#streak)" />
            <rect x="80" y="17" width="94" height="2" fill="url(#streak)" />
            <rect x="60" y="34" width="112" height="3" fill="url(#streak)" />
          </g>
        </Smudge>
      </TabBar>
    </Page>
  );
}
